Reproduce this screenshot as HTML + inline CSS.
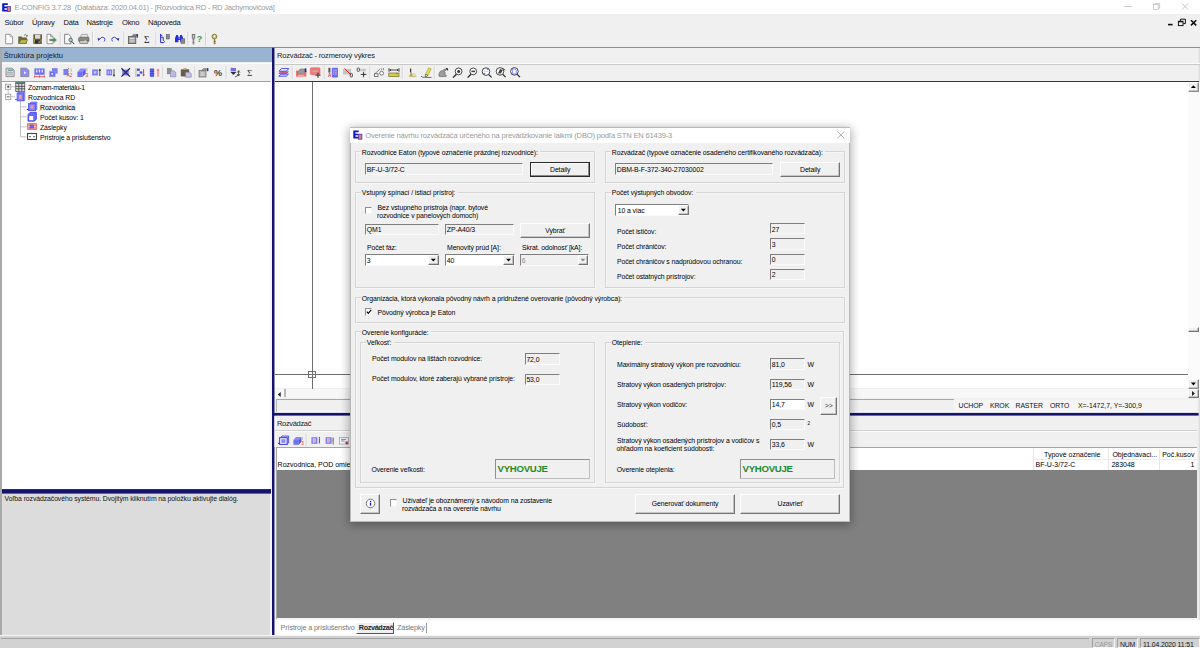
<!DOCTYPE html>
<html><head><meta charset="utf-8"><title>E-CONFIG</title>
<style>
html,body{margin:0;padding:0;}
body{width:1200px;height:648px;overflow:hidden;background:#f0f0f0;position:relative;font-family:"Liberation Sans",sans-serif;font-size:6.9px;letter-spacing:-0.1px;color:#000;line-height:1;}
.a{position:absolute;box-sizing:border-box;}
.t{position:absolute;white-space:pre;line-height:8px;height:8px;margin-top:0.7px;}
.seg{font-size:7.6px;letter-spacing:-0.26px;}
.hd{font-size:7.5px;letter-spacing:0;}
/* group box */
.gb{position:absolute;box-sizing:border-box;border:1px solid #d5d5d5;box-shadow:0.6px 0.6px 0 #fbfbfb, inset 0.6px 0.6px 0 #fbfbfb;}
.gl{position:absolute;white-space:pre;background:#f0f0f0;padding:0 2.4px 0 1px;line-height:8px;height:8px;margin-top:1.3px;}
/* sunken edit */
.ed{position:absolute;box-sizing:border-box;background:#f0f0f0;border:1.3px solid;border-color:#7e7e7e #fbfbfb #fbfbfb #7e7e7e;white-space:pre;line-height:9px;padding-left:0.8px;padding-top:0.5px;overflow:hidden;}
.ed.w{background:#fff;}
/* raised button */
.bt{position:absolute;box-sizing:border-box;background:#f0f0f0;border:1px solid;border-color:#fdfdfd #747474 #747474 #fdfdfd;box-shadow:inset -0.8px -0.8px 0 #b8b8b8;text-align:center;white-space:pre;}
.cb{position:absolute;box-sizing:border-box;background:#fff;border:1px solid;border-color:#8c8c8c #f4f4f4 #f4f4f4 #8c8c8c;}
.arr{position:absolute;width:8px;height:6px;margin:-1.5px 0 0 -1.6px;background:#000;clip-path:polygon(1.5px 1.5px,6.5px 1.5px,4px 4.3px);}
.arr.up{clip-path:polygon(1.5px 4.3px,6.5px 4.3px,4px 1.5px);}
.arr.dis{background:#8c8c8c;}
.arl{position:absolute;width:6px;height:8px;background:#15151f;clip-path:polygon(4.3px 1.5px,4.3px 6.5px,1.5px 4px);}
.arrr{position:absolute;width:6px;height:8px;background:#15151f;clip-path:polygon(1.7px 1.5px,1.7px 6.5px,4.5px 4px);}
.navy{background:#12126c;}
</style></head><body>

<!-- ===== main title bar ===== -->
<div class="a" style="left:0;top:0;width:1200px;height:14px;background:#fff;"></div>
<div class="t seg" style="left:14.5px;top:3.2px;color:#9a9a9a;">E-CONFIG 3.7.28  (Databáza: 2020.04.01) - [Rozvodnica RD - RD Jachymovičová]</div>

<!-- ===== menu bar ===== -->
<div class="t seg" style="left:4.5px;top:18.4px;color:#111;word-spacing:0;">Súbor</div>
<div class="t seg" style="left:32px;top:18.4px;color:#111;">Úpravy</div>
<div class="t seg" style="left:63.5px;top:18.4px;color:#111;">Dáta</div>
<div class="t seg" style="left:86.5px;top:18.4px;color:#111;">Nástroje</div>
<div class="t seg" style="left:122px;top:18.4px;color:#111;">Okno</div>
<div class="t seg" style="left:148px;top:18.4px;color:#111;">Nápoveda</div>

<!-- separator under toolbar -->
<div class="a" style="left:0;top:46.6px;width:1200px;height:1.2px;background:#8f8f8f;"></div>

<!-- ===== left panel ===== -->
<div class="a" style="left:1px;top:48px;width:271px;height:14.3px;background:#99b4d1;"></div>
<div class="t hd" style="left:3.8px;top:51.1px;color:#1a1a1a;">Štruktúra projektu</div>
<div class="a" style="left:1px;top:63px;width:271px;height:1px;background:#fafafa;"></div>
<div class="a" style="left:1px;top:80.6px;width:270px;height:1px;background:#a0a0a0;"></div>
<div class="a" style="left:2px;top:81.6px;width:268px;height:408.4px;background:#fff;"></div>
<div class="a" style="left:0;top:48px;width:2px;height:587px;background:#a9a9a9;"></div>
<div class="a" style="left:2px;top:493px;width:268px;height:142px;background:#dcdcdc;"></div>
<div class="t" style="left:4.6px;top:494.7px;color:#111;">Voľba rozvádzačového systému. Dvojitým kliknutím na položku aktivujte dialóg.</div>

<!-- vertical navy splitter -->

<!-- fractional-edge lines -->
<svg class="a" style="left:0;top:0;" width="1200" height="648" viewBox="0 0 1200 648">
<rect x="270" y="81.6" width="2" height="553.4" fill="#f4f4f4"/>
<rect x="2" y="489.1" width="269" height="4.5" fill="#14146e"/>
<rect x="274.4" y="411.3" width="925" height="1.2" fill="#fafafa"/>
<rect x="272" y="412.9" width="928" height="2.7" fill="#14146e"/>
<rect x="272" y="47.8" width="2.45" height="587.4" fill="#14146e"/><rect x="1198.6" y="48" width="1.4" height="587" fill="#dedede"/>
<rect x="274.45" y="416" width="1.2" height="31" fill="#fafafa"/><rect x="954" y="399.6" width="243" height="11.6" fill="#f5f5f5"/>
</svg>

<!-- ===== right top pane ===== -->
<div class="a" style="left:274.6px;top:62.6px;width:925px;height:1px;background:#fbfbfb;"></div>
<div class="a" style="left:274.6px;top:63.6px;width:925px;height:0.8px;background:#c8c8c8;"></div>
<div class="t hd" style="left:277px;top:51.1px;color:#222;letter-spacing:-0.17px;">Rozvádzač - rozmerový výkres</div>
<div class="a" style="left:274.6px;top:80.5px;width:924.4px;height:1.2px;background:#2c2c8c;"></div>
<div class="a" style="left:274.6px;top:81.7px;width:913.4px;height:306.8px;background:#fff;"></div>
<!-- canvas lines -->
<div class="a" style="left:311.6px;top:81.7px;width:1px;height:307px;background:#6e6e6e;"></div>
<div class="a" style="left:274.6px;top:373.9px;width:913.4px;height:1px;background:#6e6e6e;"></div>
<div class="a" style="left:308.4px;top:370.9px;width:7.4px;height:7px;border:1px solid #6e6e6e;"></div>

<!-- v scrollbar -->
<div class="a" style="left:1188px;top:81.7px;width:12px;height:307px;background:#fbfbfb;"></div>
<!-- h scrollbar -->
<div class="a" style="left:274.6px;top:388.5px;width:925.4px;height:9.7px;background:#f7f7f7;"></div>

<!-- status strip of drawing pane -->
<div class="a" style="left:276px;top:398.8px;width:678px;height:1px;background:#a8a8a8;"></div>
<div class="a" style="left:276px;top:398.8px;width:1px;height:13px;background:#b4b4b4;"></div>
<div class="t" style="left:958.5px;top:401.2px;color:#111;">UCHOP</div><div class="t" style="left:990px;top:401.2px;color:#111;">KROK</div><div class="t" style="left:1015.5px;top:401.2px;color:#111;">RASTER</div><div class="t" style="left:1050px;top:401.2px;color:#111;">ORTO</div><div class="t" style="left:1078px;top:401.2px;color:#111;letter-spacing:0;">X=-1472,7, Y=-300,9</div>


<!-- ===== right bottom pane ===== -->
<div class="t hd" style="left:277px;top:419.2px;color:#222;letter-spacing:-0.33px;">Rozvádzač</div>
<div class="a" style="left:274.6px;top:430px;width:922px;height:1px;background:#d0d0d0;"></div>
<div class="a" style="left:274.6px;top:431px;width:922px;height:1px;background:#fbfbfb;"></div>
<div class="a" style="left:275.6px;top:447px;width:921px;height:1.4px;background:#a6a6a6;"></div>
<div class="a" style="left:276.6px;top:448.4px;width:920px;height:170px;background:#808080;"></div>
<div class="a" style="left:276.6px;top:448.4px;width:920px;height:21.2px;background:#fff;"></div>
<div class="a" style="left:275.6px;top:447px;width:1.2px;height:172px;background:#a6a6a6;"></div>
<div class="a" style="left:276.6px;top:618.4px;width:921px;height:1.4px;background:#f4f4f4;"></div>
<!-- tabs strip -->
<div class="a" style="left:274.6px;top:619.8px;width:925.4px;height:15.2px;background:#fff;"></div>

<!-- ===== status bar ===== -->
<div class="a" style="left:0;top:635px;width:1200px;height:1.4px;background:#f5f5f5;"></div>
<div class="a" style="left:0;top:636.4px;width:1200px;height:11.6px;background:#d2d2d2;"></div>
<div class="a" style="left:1px;top:637.6px;width:1088px;height:1.2px;background:#a2a2a2;"></div>


<!-- ===== ICON OVERLAY 1: main toolbar + left toolbar ===== -->
<svg class="a" style="left:0;top:0;" width="1200" height="100" viewBox="0 0 1200 100">
<!-- app icon -->
<path d="M2.2 3.2h5.6v1.8H4.4v1.5h2.7v1.7H4.4v1.6h3.4v1.8H2.2z" fill="#1212c8"/><rect x="7.3" y="6.6" width="3.2" height="5" fill="#e87878" stroke="#2a2ab0" stroke-width="0.7"/>
<!-- separators main -->
<g stroke="#c9c9c9" stroke-width="0.9"><path d="M60.3 32v13.5M92.5 32v13.5M124 32v13.5M156 32v13.5M188 32v13.5M205.7 32v13.5"/></g>
<g stroke="#fbfbfb" stroke-width="0.7"><path d="M61.1 32v13.5M93.3 32v13.5M124.8 32v13.5M156.8 32v13.5M188.8 32v13.5M206.5 32v13.5"/></g>
<!-- 1 new -->
<path d="M5.7 34.3h4.4l2.5 2.5v7H5.7z" fill="#fdfdfd" stroke="#8c8c8c" stroke-width="0.9"/><path d="M10.1 34.3v2.5h2.5" fill="none" stroke="#9a9a9a" stroke-width="0.7"/>
<!-- 2 open -->
<path d="M18.6 36.8h2.8l0.9 1h4.2v5.6h-7.9z" fill="#746c38" stroke="#4e4a2a" stroke-width="0.5"/><path d="M18.8 43.4l2.2-3.7h6.8l-2.2 3.7z" fill="#bcba4c" stroke="#5a5630" stroke-width="0.5"/><path d="M24 35.2q1.8-1.2 3 0.6" fill="none" stroke="#555" stroke-width="0.7"/><path d="M27.6 34.8v1.6h-1.6z" fill="#444"/>
<!-- 3 save -->
<rect x="33.3" y="34.3" width="8.7" height="9.5" fill="#6a583e"/><rect x="35" y="34.7" width="5.3" height="4" fill="#d9d9d9"/><rect x="34.9" y="40.3" width="5.3" height="3.3" fill="#2e2e2e"/><rect x="38.6" y="41" width="1" height="2.2" fill="#bbb"/><rect x="33.9" y="39.2" width="0.8" height="3.4" fill="#b9b93c"/><rect x="40.7" y="39.2" width="0.8" height="3.4" fill="#b9b93c"/>
<!-- 4 export -->
<path d="M47 34.3h3.6l2.4 2.4v7H47z" fill="#fbfbfb" stroke="#8c8c8c" stroke-width="0.9"/><path d="M50.6 34.3v2.4H53" fill="none" stroke="#777" stroke-width="0.7"/><path d="M49.5 39h4.2v-1.7l3 2.7l-3 2.7v-1.7h-4.2z" fill="#3c9a3c" stroke="#b58ad8" stroke-width="0.4"/>
<!-- 5 preview -->
<path d="M64.6 34.3h4l2.4 2.4v7h-6.4z" fill="#fbfbfb" stroke="#7c7c7c" stroke-width="0.9"/><circle cx="70.6" cy="40" r="1.8" fill="#9ad8e8" stroke="#444" stroke-width="0.7"/><path d="M71.8 41.4l2.3 2.6" stroke="#333" stroke-width="1"/>
<!-- 6 print -->
<path d="M81.6 34.4h5.6l1.2 3.2h-8z" fill="#ececec" stroke="#777" stroke-width="0.6"/><rect x="78.6" y="37.2" width="10.4" height="4.6" rx="1.2" fill="#8a8a8a" stroke="#555" stroke-width="0.6"/><rect x="79.8" y="40.6" width="8" height="3" fill="#c8c8c8" stroke="#666" stroke-width="0.6"/><rect x="84.4" y="40.2" width="1.6" height="1.2" fill="#e8e040"/>
<!-- 7 undo -->
<path d="M99.5 39.2q2.4-3.6 5 -1.2q1 1.6 -0.3 3.4" fill="none" stroke="#3c3ca8" stroke-width="0.9"/><path d="M97.4 38.2l3.2 0.4l-2.2 2.4z" fill="#2828a0"/>
<!-- 8 redo -->
<path d="M117.2 39.2q-2.4-3.6 -5 -1.2q-1 1.6 0.3 3.4" fill="none" stroke="#3c3ca8" stroke-width="0.9"/><path d="M119.4 38.2l-3.2 0.4l2.2 2.4z" fill="#2828a0"/>
<!-- 9 properties -->
<rect x="128.4" y="36.4" width="7.4" height="7.2" fill="#a8a8a8" stroke="#555" stroke-width="0.8"/><path d="M130 38.6h4.2M130 41h4.2" stroke="#eee" stroke-width="0.8"/><path d="M131.6 36.4l1.8-2h4l-1.6 2z" fill="#888" stroke="#555" stroke-width="0.5"/><rect x="136.6" y="34.2" width="1.3" height="3.4" fill="#1a1a9a"/>
<!-- 10 sigma -->
<text x="144" y="42.6" font-family="Liberation Serif" font-size="9.4" fill="#333">&#931;</text>
<!-- 11 tree -->
<path d="M160.6 34v8.6h3M160.6 37.2h2.6v3M160.6 34.4l1.6 1.6" fill="none" stroke="#2a2ae0" stroke-width="1"/><path d="M163.2 40.2l1.4 1.2l-1.4 1.8" fill="none" stroke="#2a2ae0" stroke-width="0.9"/><rect x="166.2" y="34.4" width="3.2" height="4.6" fill="#8a8a8a" stroke="#555" stroke-width="0.5"/>
<!-- 12 binoculars -->
<path d="M175 38.6l1.2-3.6h1.8l0.6 2.4h1l0.6-2.4h1.8l1.2 3.6v3.6h-3v-2.2h-1.8v2.2H175z" fill="#2a2ae0"/><rect x="181" y="38.8" width="3.8" height="4.6" fill="#8a8a8a" stroke="#555" stroke-width="0.5"/><circle cx="179.3" cy="38.6" r="0.6" fill="#50d8e8"/>
<!-- 13 help -->
<rect x="192.2" y="34.4" width="2.6" height="3.8" fill="#c4c4c4" stroke="#555" stroke-width="0.7"/><rect x="192.6" y="39.2" width="1.7" height="1.4" fill="#555"/><rect x="192.6" y="41.4" width="1.7" height="1.4" fill="#555"/><rect x="192.6" y="43.4" width="1.7" height="1" fill="#555"/><text x="196.6" y="42.2" font-family="Liberation Sans" font-weight="bold" font-size="9.5" fill="#3c9a50">?</text>
<!-- 14 key -->
<circle cx="214.4" cy="36.6" r="2.4" fill="#d8d048" stroke="#7a6a3a" stroke-width="0.9"/><path d="M214.4 39v5.2M214.4 41.4h1.4M214.4 43.2h1.2" stroke="#8a7840" stroke-width="1.3"/><circle cx="214.4" cy="36.2" r="0.7" fill="#fff"/>

<!-- ==== left panel toolbar (y center 72.5) ==== -->
<g stroke="#c9c9c9" stroke-width="0.9"><path d="M163 66v13M195 66v13M226.2 66v13"/></g>
<g stroke="#fbfbfb" stroke-width="0.7"><path d="M163.8 66v13M195.8 66v13M227 66v13"/></g>
<!-- L1 list doc -->
<path d="M6 68.2h6l2.2 2v6.4H6z" fill="#d6d6d6" stroke="#7e7e7e" stroke-width="0.8"/><rect x="8" y="69.6" width="5" height="1.1" fill="#3a9ac0"/><path d="M7.2 72.4h5.8M7.2 74.2h5.8" stroke="#9a9a9a" stroke-width="0.7"/>
<!-- L2 doc blue -->
<path d="M20.8 68.2h5.6l2.4 2v6.4h-8z" fill="#8c8cf4" stroke="#7e7e7e" stroke-width="0.8"/><path d="M24 71.2l2.4 1.6l-2.4 1.6z" fill="#e8e8ff"/>
<!-- L3 blue panel red base -->
<rect x="34.4" y="68.4" width="10.2" height="6.4" fill="#7070f2"/><path d="M36.8 69.4v3M39.5 69.4v3M42.2 69.4v3" stroke="#f0f0ff" stroke-width="1.2"/><path d="M34.4 76.6h10.2M34.6 75.4v2.2M39.5 75.4v2.2M44.4 75.4v2.2" stroke="#e83030" stroke-width="0.7"/>
<!-- L4 cubes -->
<rect x="52" y="68.2" width="5.6" height="5.4" fill="#7878f4"/><rect x="49.4" y="71.2" width="5.8" height="5.6" fill="#7070f2" stroke="#a0a0ff" stroke-width="0.5"/><rect x="51.4" y="73" width="1.6" height="1.8" fill="#e8e8ff"/>
<!-- L5 -->
<rect x="63.4" y="69" width="4.6" height="6" fill="#7c7cf4"/><path d="M68.6 68v7" stroke="#777" stroke-width="0.8" stroke-dasharray="1 0.6"/><text x="66.8" y="77.2" font-family="Liberation Sans" font-size="4.6" fill="#e83030">A2</text><path d="M71.2 68.4v3.4" stroke="#999" stroke-width="0.6"/>
<!-- L6 3D + red 3 -->
<path d="M77.4 72l3-3.4h5.2l-3 3.4z" fill="#8a8af6"/><path d="M77.4 72h5.2v5h-5.2z" fill="#7070f2"/><path d="M82.6 72l3-3.4v5l-3 3.4z" fill="#5858e0"/><text x="85.2" y="77" font-family="Liberation Sans" font-size="5.6" fill="#e83030">3</text><path d="M86.8 68.2v3" stroke="#888" stroke-width="0.6"/>
<!-- L7 box + up arrow -->
<rect x="92.2" y="69.4" width="5.8" height="6" fill="#7c7cf4"/><rect x="93.8" y="71.2" width="2.6" height="2.4" fill="#c8c8ff"/><path d="M99.8 76v-6.6" stroke="#333" stroke-width="0.9"/><path d="M98.4 70.8l1.4-2.2l1.4 2.2z" fill="#333"/>
<!-- L8 box + down arrow -->
<rect x="106.4" y="69.4" width="5.8" height="6" fill="#7c7cf4"/><path d="M108.2 71v2.8M110.4 71v2.8" stroke="#d8d8ff" stroke-width="0.9"/><path d="M114 69v6" stroke="#444" stroke-width="0.9"/><circle cx="114" cy="75.4" r="1" fill="#444"/>
<!-- L9 X -->
<rect x="122.2" y="69.6" width="6.6" height="5.8" fill="#7c7cf4"/><path d="M121.4 68.2l8.6 8.4M130 68.2l-8.6 8.4" stroke="#26264a" stroke-width="1.2"/>
<!-- L10 arrows -->
<path d="M136 68v9" stroke="#9a9a9a" stroke-width="0.8"/><rect x="137" y="68.6" width="2.8" height="2.2" fill="#4a4af0"/><rect x="139.6" y="71.4" width="2.8" height="2.2" fill="#4a4af0"/><rect x="137" y="74.2" width="2.8" height="2.2" fill="#4a4af0"/><path d="M143.6 69v6.6" stroke="#e83030" stroke-width="0.9"/><path d="M142.2 74.6l1.4 2l1.4-2z" fill="#e83030"/>
<!-- L11 stack + red up -->
<rect x="150" y="68.4" width="4" height="8.6" fill="#7070f2"/><path d="M149.6 69.8h4.8M149.6 71.6h4.8M149.6 73.4h4.8M149.6 75.2h4.8" stroke="#2a2a90" stroke-width="0.6"/><path d="M158 77v-6.8" stroke="#f06060" stroke-width="0.9"/><path d="M156.6 70.8l1.4-2.4l1.4 2.4z" fill="#f06060"/>
<!-- L12 copy -->
<rect x="167.4" y="68.4" width="3.8" height="5.4" fill="#8e8e8e" stroke="#666" stroke-width="0.5"/><path d="M170.4 70.8h3.6l1.8 1.6v4.4h-5.4z" fill="#bcbcd8" stroke="#7878b8" stroke-width="0.6"/>
<!-- L13 paste -->
<rect x="180.8" y="69.2" width="8.4" height="7.2" rx="0.8" fill="#6a5a48"/><rect x="183.6" y="68.2" width="3" height="1.8" fill="#a8a060"/><path d="M185.6 72.2h3.8l1.8 1.4v3.6h-5.6z" fill="#c4c4dc" stroke="#7878b8" stroke-width="0.6"/>
<!-- L14 properties -->
<rect x="199" y="70.6" width="7" height="6.4" fill="#b4b4b4" stroke="#6a6a6a" stroke-width="0.7"/><path d="M200.4 73h4.2M200.4 75h4.2" stroke="#eee" stroke-width="0.7"/><path d="M201.6 70.6l1.8-2h4l-1.6 2z" fill="#999" stroke="#666" stroke-width="0.5"/><rect x="207" y="68.2" width="1.4" height="3" fill="#2a2ab8"/>
<!-- L15 percent -->
<text x="214" y="76" font-family="Liberation Sans" font-weight="bold" font-size="8.4" fill="#3a3a3a" textLength="8" lengthAdjust="spacingAndGlyphs">%</text>
<!-- L16 -->
<rect x="230.6" y="68" width="5.4" height="3.4" fill="#7070f2"/><rect x="231" y="67.6" width="1.6" height="1" fill="#e06060"/><path d="M230.4 72l3 3l3-3z" fill="#2c2c4c"/><path d="M235 77l3.6-2M238.6 70.6v5" stroke="#333" stroke-width="0.8"/><path d="M237.2 72.6l1.4-2l1.4 2M237.2 74l1.4 2l1.4-2" fill="none" stroke="#333" stroke-width="0.7"/>
<!-- L17 sigma -->
<text x="247" y="76.2" font-family="Liberation Serif" font-size="9" fill="#333">&#931;</text>
</svg>


<!-- ===== TREE ===== -->
<div class="a" style="left:39px;top:102.4px;width:37.4px;height:9px;background:#efefef;"></div>
<div class="t" style="left:28px;top:83.2px;letter-spacing:-0.27px;">Zoznam-materiálu-1</div>
<div class="t" style="left:28px;top:93.2px;letter-spacing:-0.06px;">Rozvodnica RD</div>
<div class="t" style="left:40px;top:103.2px;">Rozvodnica</div>
<div class="t" style="left:40px;top:113.2px;">Počet kusov: 1</div>
<div class="t" style="left:40px;top:123.2px;">Záslepky</div>
<div class="t" style="left:40px;top:133.2px;letter-spacing:-0.14px;">Prístroje a príslušenstvo</div>
<svg class="a" style="left:0;top:80px;" width="272" height="64" viewBox="0 80 272 64">
<g stroke="#bcbcbc" stroke-width="0.9" fill="none"><path d="M8.2 89.6v4.4M11 86.8h4.4M11 96.8h4.4M20.5 101v35.8M20.5 106.8h6M20.5 116.8h6M20.5 126.8h6M20.5 136.8h6"/></g>
<rect x="5.6" y="84.2" width="5.2" height="5.2" fill="#fff" stroke="#8a8a8a" stroke-width="0.7"/><path d="M6.8 86.8h2.8M8.2 85.4v2.8" stroke="#222" stroke-width="0.7"/>
<rect x="5.6" y="94.2" width="5.2" height="5.2" fill="#fff" stroke="#8a8a8a" stroke-width="0.7"/><path d="M6.8 96.8h2.8" stroke="#222" stroke-width="0.7"/>
<!-- grid icon -->
<rect x="15.8" y="82.2" width="9" height="9.4" fill="#dcdcdc" stroke="#333" stroke-width="0.7"/><rect x="16.2" y="82.4" width="8.2" height="1.6" fill="#2a8a6a"/><path d="M18.8 84v7.6M21.8 84v7.6M15.8 86.4h9M15.8 88.8h9" stroke="#333" stroke-width="0.7"/>
<!-- rozvodnica RD icon -->
<path d="M17.4 93l1.6-1.2h5.8v8.6h-1.6" fill="#9a9afa" stroke="#6a6af4" stroke-width="0.8"/><rect x="17.2" y="93.2" width="6.2" height="7.6" fill="#8484f8" stroke="#5a5af4" stroke-width="1"/><rect x="19" y="95" width="2.6" height="3.8" fill="#f49a9a"/><path d="M15.6 97v2.4" stroke="#fff" stroke-width="0.8"/><path d="M15 99.4h2" stroke="#5a5af4" stroke-width="1"/>
<!-- rozvodnica child icon -->
<path d="M29.6 103.4l1.6-1.4h5.6v7.2l-1.4 1.4" fill="#9a9afa" stroke="#5a5af4" stroke-width="0.8"/><rect x="28.6" y="103.6" width="6.8" height="7" fill="#8484f8" stroke="#5a5af4" stroke-width="1"/><rect x="30.6" y="105.4" width="2.8" height="3.2" fill="#f49a9a"/><path d="M26.8 109.4h2" stroke="#3a3af0" stroke-width="1.2"/>
<!-- pocet kusov icon -->
<path d="M28 114.6l2-2.2h6.4v6.6l-2 2.2H28z" fill="#6a6af4" stroke="#2a2ae0" stroke-width="0.7"/><rect x="29.2" y="116" width="4" height="4.2" fill="#fff"/>
<!-- zaslepky icon -->
<rect x="27.6" y="123.6" width="8.8" height="5.8" fill="#f49090" stroke="#ee6060" stroke-width="0.8"/><rect x="30" y="125" width="3.4" height="3" fill="#7070f0" stroke="#3030c0" stroke-width="0.5"/><path d="M28.6 126.5h1.2M34.2 126.5h1.2" stroke="#fff" stroke-width="0.7"/>
<!-- pristroje icon -->
<rect x="27.6" y="133.4" width="8.8" height="6" fill="#fff" stroke="#222" stroke-width="0.9"/><rect x="29.4" y="136" width="1.2" height="1.2" fill="#222"/><rect x="33.4" y="136" width="1.2" height="1.2" fill="#222"/>
</svg>

<!-- ===== window controls ===== -->
<svg class="a" style="left:1110px;top:0;" width="90" height="30" viewBox="1110 0 90 30">
<path d="M1124.4 6.5h7" stroke="#b8b8b8" stroke-width="0.8"/>
<rect x="1153.4" y="4.6" width="4.8" height="4.8" fill="none" stroke="#b8b8b8" stroke-width="0.7"/><path d="M1154.8 4.6v-1.2h4.8v4.8h-1.4" fill="none" stroke="#b8b8b8" stroke-width="0.7"/>
<path d="M1182 3.4l6.2 6.2M1188.2 3.4l-6.2 6.2" stroke="#b8b8b8" stroke-width="0.8"/>
<path d="M1168 24.6h4.6" stroke="#111" stroke-width="1.6"/>
<rect x="1178.4" y="21.4" width="4.6" height="4.2" fill="#f0f0f0" stroke="#111" stroke-width="1"/><path d="M1180.4 21v-1.8h5v4.4h-2" fill="none" stroke="#111" stroke-width="1"/><path d="M1178.4 21.6h4.6" stroke="#111" stroke-width="1.4"/>
<path d="M1191 20.2l5.2 5.2M1196.2 20.2l-5.2 5.2" stroke="#111" stroke-width="1.6"/>
</svg>

<!-- ===== scrollbars ===== -->
<div class="bt" style="left:1188.2px;top:82px;width:10.4px;height:9.8px;border-color:#fff #8c8c8c #8c8c8c #fff;"></div>
<div class="arr up" style="left:1191px;top:85.2px;"></div>
<div class="bt" style="left:1188.2px;top:379px;width:10.4px;height:9.5px;border-color:#fff #8c8c8c #8c8c8c #fff;"></div>
<div class="arr" style="left:1191px;top:382.6px;"></div>
<div class="bt" style="left:1188.2px;top:327px;width:10.4px;height:5px;"></div>
<div class="arl" style="left:276.4px;top:390.4px;"></div>
<svg class="a" style="left:280px;top:386px;" width="10" height="14" viewBox="280 386 10 14"><rect x="284.1" y="388.9" width="1.9" height="8.2" fill="#b4b4b4"/></svg>
<div class="bt" style="left:1188.2px;top:389px;width:10.4px;height:9.2px;"></div><div class="arrr" style="left:1190.4px;top:389.6px;"></div>

<!-- ===== table ===== -->
<div class="t" style="left:277.6px;top:460.6px;letter-spacing:0;font-size:7px;">Rozvodnica, POD omietku, 72 mod.</div>
<div class="t" style="left:1044px;top:450.2px;letter-spacing:0;font-size:7px;">Typové označenie</div>
<div class="t" style="left:1112.4px;top:450.2px;letter-spacing:0;font-size:7px;">Objednávaci...</div>
<div class="t" style="left:1162.2px;top:450.2px;letter-spacing:0;font-size:7px;">Poč.kusov</div>
<div class="t" style="left:1035.6px;top:460.6px;letter-spacing:0;font-size:7px;">BF-U-3/72-C</div>
<div class="t" style="left:1111.4px;top:460.6px;letter-spacing:0;font-size:7px;">283048</div>
<div class="t" style="left:1190.6px;top:460.6px;letter-spacing:0;font-size:7px;">1</div>
<div class="a" style="left:1033.4px;top:449px;width:0.8px;height:20.6px;background:#e6e6e6;"></div>
<div class="a" style="left:1108.4px;top:449px;width:0.8px;height:20.6px;background:#e6e6e6;"></div>
<div class="a" style="left:1158.6px;top:449px;width:0.8px;height:20.6px;background:#e6e6e6;"></div>
<div class="a" style="left:1033.4px;top:459.4px;width:163px;height:0.8px;background:#ececec;"></div>

<!-- ===== tabs ===== -->
<div class="t" style="left:280.6px;top:623.4px;color:#777;font-size:7.2px;letter-spacing:-0.12px;">Prístroje a príslušenstvo</div>
<div class="a" style="left:355.8px;top:622.4px;width:38.4px;height:11.6px;background:#f0f0f0;border:1px solid;border-color:#fdfdfd #555 #555 #fdfdfd;"></div>
<div class="t" style="left:358.8px;top:623.4px;color:#222;font-weight:bold;font-size:7.2px;letter-spacing:-0.32px;">Rozvádzač</div>
<div class="t" style="left:397px;top:623.4px;color:#777;font-size:7.2px;letter-spacing:-0.12px;">Záslepky</div>
<div class="a" style="left:426px;top:622.6px;width:0.8px;height:10.6px;background:#9a9a9a;"></div>

<!-- ===== status cells ===== -->
<div class="a" style="left:1091.6px;top:637.6px;width:23.6px;height:10.4px;border:1px solid;border-color:#a0a0a0 #f8f8f8 #f8f8f8 #a0a0a0;"></div>
<div class="a" style="left:1117.4px;top:637.6px;width:20.6px;height:10.4px;border:1px solid;border-color:#a0a0a0 #f8f8f8 #f8f8f8 #a0a0a0;"></div>
<div class="a" style="left:1140.2px;top:637.6px;width:59.8px;height:10.4px;border:1px solid;border-color:#a0a0a0 #f8f8f8 #f8f8f8 #a0a0a0;"></div>
<div class="t" style="left:1094.8px;top:640.2px;color:#9a9a9a;letter-spacing:-0.4px;">CAPS</div>
<div class="t" style="left:1120px;top:640.2px;color:#223;letter-spacing:-0.25px;">NUM</div>
<div class="t" style="left:1143px;top:640.2px;color:#111;letter-spacing:-0.12px;">11.04.2020 11:51</div>


<!-- ===== ICON OVERLAY 2: drawing toolbar (y center 72.3) ===== -->
<svg class="a" style="left:274px;top:62px;" width="260" height="20" viewBox="274 62 260 20">
<g stroke="#c9c9c9" stroke-width="0.9"><path d="M292.3 66v13M324.3 66v13M370 66v13M402.3 66v13M434.3 66v13"/></g>
<g stroke="#fbfbfb" stroke-width="0.7"><path d="M293.1 66v13M325.1 66v13M370.8 66v13M403.1 66v13M435.1 66v13"/></g>
<!-- D1 layers -->
<path d="M279 71.2l2.4-2.6h7.4l-2.4 2.6z" fill="#f4f4ff" stroke="#3a3af0" stroke-width="0.9"/><path d="M278.8 73.4l2-1.6h7.6l-2 1.6z" fill="#f06868" stroke="#3a3af0" stroke-width="0.6"/><path d="M278.8 76.2l2.2-2h7.4l-2.2 2z" fill="#f4f4ff" stroke="#3a3af0" stroke-width="0.9"/>
<!-- D2 red/gray -->
<rect x="296" y="70.6" width="10.4" height="6" fill="#f07070"/><path d="M297.6 72.6l2.6-3.6h5.2v3.4l-2.2 1.8h-5.6z" fill="#9a9a9a" stroke="#666" stroke-width="0.5"/><rect x="304.8" y="68.4" width="1.5" height="3.6" fill="#1a1a9a"/><path d="M298 75.2h6" stroke="#f8d0d0" stroke-width="0.8"/>
<!-- D3 red + cross -->
<rect x="310.4" y="67.8" width="9.6" height="6.8" rx="0.8" fill="#f07878" stroke="#e85a5a" stroke-width="0.6"/><rect x="312.6" y="70.4" width="5.2" height="1.8" fill="#b8b0b0"/><path d="M318 72.6v5.2M315.4 75.2h5.2" stroke="#333" stroke-width="1"/>
<!-- D4 blue w/ red A -->
<rect x="331.8" y="67.8" width="6.2" height="9.6" rx="0.8" fill="#6a6af4"/><path d="M333.8 69.6v6M336 69.6v6" stroke="#f8d8d8" stroke-width="1" stroke-dasharray="1.2 0.8"/><rect x="328.4" y="67.8" width="2" height="4.8" fill="#555"/><text x="328" y="77.4" font-family="Liberation Sans" font-weight="bold" font-size="4.6" fill="#e83030">A</text>
<!-- D5 gray w red diagonal -->
<rect x="343" y="69" width="8" height="5.4" fill="#c4c4c4"/><path d="M344.6 68.4l6.4 6.6" stroke="#e02020" stroke-width="1"/><rect x="350.2" y="73.4" width="2.2" height="3.6" rx="0.8" fill="none" stroke="#444" stroke-width="0.9"/>
<!-- D6 cross -->
<rect x="357.2" y="68" width="2.2" height="3.4" rx="0.8" fill="none" stroke="#444" stroke-width="0.9"/><rect x="360" y="68.8" width="6" height="2.4" fill="#c8c8c8"/><path d="M363.6 71.8v5.4M360.8 74.4h5.6" stroke="#333" stroke-width="1"/>
<!-- D7 link -->
<path d="M375 73.6l5-4.6" stroke="#555" stroke-width="0.7"/><rect x="374.6" y="73.8" width="3.4" height="2.8" fill="#fff" stroke="#444" stroke-width="0.7"/><circle cx="381.6" cy="73.2" r="1.9" fill="#fff" stroke="#444" stroke-width="0.7"/><path d="M381 68.4l1 1.6M383.4 68v2.2" stroke="#444" stroke-width="0.6"/>
<!-- D8 measure -->
<path d="M389 68.2v3.6M399 68.2v3.6M389.6 70h8.8" stroke="#222" stroke-width="0.8"/><path d="M389.4 70l1.6-1v2zM398.6 70l-1.6-1v2z" fill="#222"/><rect x="388.8" y="73" width="10.2" height="3.6" fill="#d8d040" stroke="#6a6a30" stroke-width="0.7"/><path d="M397 73v1.4" stroke="#444" stroke-width="0.6"/>
<!-- D9 -->
<path d="M410.6 68.4v4" stroke="#333" stroke-width="1.2"/><path d="M409 76.4l1.8-4h1.2l1 4z" fill="#c0a840"/><path d="M412.6 76.4l1.8-3.2l1.8 3.2z" fill="#f0e8c8" stroke="#c8b888" stroke-width="0.5"/><path d="M408.6 76.6h8" stroke="#b8a878" stroke-width="0.5"/>
<!-- D10 pencil -->
<path d="M425.4 74.4l3.2-6.6l2.6 1l-3.2 6.6z" fill="#e8e040" stroke="#8a8a3a" stroke-width="0.5"/><path d="M425.4 74.4l2.6 1l-2.6 1.8z" fill="#f4f4f4" stroke="#444" stroke-width="0.6"/><path d="M421 76.2q2 2 4.4 0.8M425.4 77.4h6" fill="none" stroke="#333" stroke-width="0.7"/>
<!-- D11 hand/prev -->
<path d="M439.2 73.2q0.8-2.6 3.4-2.8l2.4-1.4l1 1l-1.4 1.6q1 1.2 0.4 2.6l1.6 1.8l-0.8 0.6h-6.4q-1-1.6-0.2-3.4z" fill="#9c9c9c" stroke="#5a5a5a" stroke-width="0.6"/><path d="M445.4 67.8l2.4 0.4l0.6 2.4l-1.6-0.4z" fill="#333"/>
<!-- D12 zoom+ -->
<circle cx="458.6" cy="71.4" r="3.4" fill="#fff" stroke="#333" stroke-width="0.9"/><path d="M456.4 74.2l-3.4 3.4" stroke="#222" stroke-width="1.3"/><circle cx="458.6" cy="71.4" r="1.5" fill="#333"/>
<!-- D13 zoom- -->
<circle cx="473.2" cy="71.4" r="3.4" fill="#fff" stroke="#333" stroke-width="0.9"/><path d="M471 74.2l-3.4 3.4" stroke="#222" stroke-width="1.3"/><rect x="471.4" y="70.6" width="3.6" height="1.6" fill="#444"/>
<!-- D14 zoom window -->
<circle cx="486" cy="71.6" r="3.8" fill="#fff" stroke="#333" stroke-width="0.9"/><path d="M488.8 74.6l2.8 2.8" stroke="#222" stroke-width="1.2"/><path d="M483.6 73.6l1.4-0.2l-1 1.2zM488.4 69.4l-1.4 0.2l1-1.2z" fill="#3a5af0" stroke="#3a5af0" stroke-width="0.6"/><path d="M483.8 71.4h4.4" stroke="#aaa" stroke-width="0.5"/>
<!-- D15 zoom all -->
<circle cx="500" cy="71.4" r="3.8" fill="#fff" stroke="#333" stroke-width="0.9"/><path d="M502.8 74.4l2.8 2.8" stroke="#222" stroke-width="1.2"/><path d="M498 73.6l2-4.6l2.8 1l-1.8 3.6z" fill="#444"/><path d="M502 68.6q2 0.2 3.2 1.6" fill="none" stroke="#333" stroke-width="0.9"/>
<!-- D16 zoom blue -->
<circle cx="514.4" cy="71.4" r="3.8" fill="#fff" stroke="#333" stroke-width="0.9"/><path d="M517.2 74.4l2.8 2.8" stroke="#222" stroke-width="1.2"/><path d="M512.6 69h2.4l1.3 1.3v3.6h-3.7z" fill="#fafaff" stroke="#4a4af4" stroke-width="0.6"/>
</svg>

<!-- ===== ICON OVERLAY 3: bottom pane toolbar (y center 440.5) ===== -->
<svg class="a" style="left:274px;top:432px;" width="80" height="16" viewBox="274 432 80 16">
<path d="M306.3 434v12.6" stroke="#c9c9c9" stroke-width="0.9"/><path d="M307.1 434v12.6" stroke="#fbfbfb" stroke-width="0.7"/>
<path d="M280.6 437.4l1.6-1.4h6.4v7l-1.4 1.4" fill="#c8c8ff" stroke="#3a3af0" stroke-width="0.8"/><rect x="279.6" y="437.6" width="7.6" height="6.8" fill="#e8e8ff" stroke="#3a3af0" stroke-width="1"/><rect x="281.4" y="439.2" width="4" height="3.6" fill="#8a8af6"/><path d="M278 443.4h2" stroke="#3a3af0" stroke-width="1.2"/>
<path d="M293.4 440l2.6-3h5.4l-2.6 3z" fill="#8a8af6"/><path d="M293.4 440h5.4v4.8h-5.4z" fill="#7070f2"/><path d="M298.8 440l2.6-3v4.8l-2.6 3z" fill="#5858e0"/><path d="M302.4 437v3" stroke="#999" stroke-width="0.6"/><text x="301.2" y="445" font-family="Liberation Sans" font-size="4.6" fill="#e83030">3</text>
<rect x="311.4" y="437.2" width="6" height="6.6" fill="#7c7cf4"/><rect x="313" y="438.8" width="2.4" height="3.4" fill="#f0a0a0" stroke="#e8e8ff" stroke-width="0.4"/><path d="M319.4 438.4v5" stroke="#2a2ae0" stroke-width="0.9"/><circle cx="319.4" cy="437.6" r="0.6" fill="#2a2ae0"/>
<rect x="325.6" y="437.2" width="6" height="6.6" fill="#7c7cf4"/><rect x="327.2" y="438.8" width="2.4" height="3.4" fill="#f0a0a0" stroke="#e8e8ff" stroke-width="0.4"/><rect x="332.4" y="437.6" width="1.6" height="5" fill="#8a8a8a"/><path d="M333.2 442.6v2" stroke="#e04040" stroke-width="1"/>
<rect x="339.6" y="437.4" width="9" height="6.6" fill="#fafafa" stroke="#9a9a9a" stroke-width="0.7"/><path d="M341 439.4h5M341 441h3.6" stroke="#4a4ad8" stroke-width="0.7"/><rect x="345.4" y="441.4" width="2.4" height="2.4" fill="#e04040"/><rect x="346" y="442.8" width="1.6" height="1.4" fill="#3a3ad0"/>
</svg>


<!-- ===== DIALOG ===== -->
<div class="a" style="left:349.5px;top:127.4px;width:500.6px;height:394.4px;background:#f0f0f0;border:0.7px solid #b9b9b9;box-shadow:0 2px 9px 1px rgba(0,0,0,0.33);"></div>
<div class="a" style="left:350.2px;top:128px;width:499.6px;height:14.6px;background:#fff;"></div>
<svg class="a" style="left:353px;top:130px;" width="10" height="10" viewBox="0 0 10 10"><path d="M0.3 0.6h5.4v1.7H2.4v1.4h2.6v1.6H2.4v1.5h3.3v1.7H0.3z" fill="#1212c8"/><rect x="5.3" y="4.2" width="3.6" height="5" fill="#e87878" stroke="#2a2ab0" stroke-width="0.7"/></svg>
<div class="t seg" style="left:365.2px;top:131.4px;color:#9a9a9a;letter-spacing:-0.185px;">Overenie návrhu rozvádzača určeného na prevádzkovanie laikmi (DBO) podľa STN EN 61439-3</div>
<svg class="a" style="left:836.5px;top:131px;" width="8" height="8" viewBox="0 0 8 8"><path d="M0.6 0.6L7.2 7.2M7.2 0.6L0.6 7.2" stroke="#9a9a9a" stroke-width="0.8" fill="none"/></svg>

<!-- GB1 Rozvodnice Eaton -->
<div class="gb" style="left:355.2px;top:151.3px;width:240px;height:32.2px;"></div>
<div class="gl" style="left:360.8px;top:147.6px;">Rozvodnice Eaton (typové označenie prázdnej rozvodnice):</div>
<div class="ed" style="left:365px;top:163.4px;width:157.6px;height:11.4px;">BF-U-3/72-C</div>
<div class="bt" style="left:530.2px;top:162.2px;width:60px;height:15px;border:1.2px solid #2a2a2a;box-shadow:inset -1px -1px 0 #8a8a8a, inset 1px 1px 0 #fcfcfc;line-height:13.6px;">Detaily</div>

<!-- GB R1 Rozvádzač -->
<div class="gb" style="left:605.2px;top:151.3px;width:239.6px;height:32.2px;"></div>
<div class="gl" style="left:610.8px;top:147.6px;">Rozvádzač (typové označenie osadeného certifikovaného rozvádzača):</div>
<div class="ed" style="left:615px;top:163.4px;width:157.6px;height:11.4px;">DBM-B-F-372-340-27030002</div>
<div class="bt" style="left:780.2px;top:162.2px;width:60px;height:15px;line-height:13px;">Detaily</div>

<!-- GB2 Vstupný spínací -->
<div class="gb" style="left:355.2px;top:191.6px;width:240px;height:96.8px;"></div>
<div class="gl" style="left:360.8px;top:187.9px;">Vstupný spínací / istiaci prístroj:</div>
<div class="cb" style="left:365px;top:207px;width:7.4px;height:7.4px;"></div>
<div class="t" style="left:377.5px;top:203.2px;">Bez vstupného prístroja (napr. bytové</div>
<div class="t" style="left:377px;top:211.3px;">rozvodnice v panelových domoch)</div>
<div class="ed" style="left:365px;top:223.9px;width:74.4px;height:10.8px;">QM1</div>
<div class="ed" style="left:445px;top:223.9px;width:69px;height:10.8px;">ZP-A40/3</div>
<div class="bt" style="left:520px;top:223.2px;width:70.2px;height:15px;line-height:13px;">Vybrať</div>
<div class="t" style="left:367px;top:243.8px;">Počet fáz:</div>
<div class="t" style="left:447px;top:243.8px;">Menovitý prúd [A]:</div>
<div class="t" style="left:522px;top:243.8px;">Skrat. odolnosť [kA]:</div>
<div class="ed w" style="left:365px;top:254px;width:74.4px;height:11.5px;line-height:10px;">3</div>
<div class="bt" style="left:428.0px;top:254.8px;width:10.6px;height:10.1px;"></div><div class="arr" style="left:430.9px;top:258.7px;"></div>
<div class="ed w" style="left:445px;top:254px;width:69.6px;height:11.5px;line-height:10px;">40</div>
<div class="bt" style="left:503.2px;top:254.8px;width:10.6px;height:10.1px;"></div><div class="arr" style="left:506.1px;top:258.7px;"></div>
<div class="ed" style="left:520px;top:254px;width:69px;height:11.5px;line-height:10px;color:#8c8c8c;">6</div>
<div class="bt" style="left:577.6px;top:254.8px;width:10.6px;height:10.1px;"></div><div class="arr dis" style="left:580.5px;top:258.7px;"></div>

<!-- GB R2 Počet výstupných obvodov -->
<div class="gb" style="left:605.2px;top:191.6px;width:239.6px;height:96.8px;"></div>
<div class="gl" style="left:610.8px;top:187.9px;">Počet výstupných obvodov:</div>
<div class="ed w" style="left:615px;top:204px;width:74.4px;height:11.5px;line-height:10px;padding-left:1.8px;">10 a viac</div>
<div class="bt" style="left:678.0px;top:204.8px;width:10.6px;height:10.1px;"></div><div class="arr" style="left:680.9px;top:208.7px;"></div>
<div class="t" style="left:617px;top:227.2px;">Počet ističov:</div>
<div class="t" style="left:617px;top:242.4px;">Počet chráničov:</div>
<div class="t" style="left:617px;top:257.6px;">Počet chráničov s nadprúdovou ochranou:</div>
<div class="t" style="left:617px;top:272.6px;">Počet ostatných prístrojov:</div>
<div class="ed" style="left:770px;top:223.2px;width:34.6px;height:11.2px;">27</div>
<div class="ed" style="left:770px;top:238.4px;width:34.6px;height:11.2px;">3</div>
<div class="ed" style="left:770px;top:253.7px;width:34.6px;height:11.2px;">0</div>
<div class="ed" style="left:770px;top:268.8px;width:34.6px;height:11.2px;">2</div>

<!-- GB3 Organizácia -->
<div class="gb" style="left:355.2px;top:297.4px;width:489.6px;height:25.8px;"></div>
<div class="gl" style="left:360.8px;top:293.7px;">Organizácia, ktorá vykonala pôvodný návrh a pridružené overovanie (pôvodný výrobca):</div>
<div class="cb" style="left:365px;top:308.4px;width:7.4px;height:7.4px;"></div>
<svg class="a" style="left:366px;top:309.4px;" width="6" height="6" viewBox="0 0 6 6"><path d="M0.8 2.6L2.3 4.3L5.2 0.9" stroke="#000" stroke-width="1.2" fill="none"/></svg>
<div class="t" style="left:377.5px;top:308.2px;">Pôvodný výrobca je Eaton</div>

<!-- GB4 Overenie konfigurácie -->
<div class="gb" style="left:355.2px;top:331.3px;width:488.4px;height:156.5px;"></div>
<div class="gl" style="left:360.8px;top:327.6px;">Overenie konfigurácie:</div>
<!-- Veľkosť -->
<div class="gb" style="left:360.2px;top:341.8px;width:234.9px;height:141px;"></div>
<div class="gl" style="left:365.8px;top:338px;">Veľkosť:</div>
<div class="t" style="left:372px;top:354.7px;">Počet modulov na lištách rozvodnice:</div>
<div class="t" style="left:372px;top:374.8px;">Počet modulov, ktoré zaberajú vybrané prístroje:</div>
<div class="ed" style="left:524.6px;top:353.4px;width:35px;height:11.4px;">72,0</div>
<div class="ed" style="left:524.6px;top:373.7px;width:35px;height:11.4px;">53,0</div>
<div class="t" style="left:371.4px;top:465.3px;">Overenie veľkosti:</div>
<div class="a" style="left:495px;top:458.7px;width:95.2px;height:20.2px;border:1px solid;border-color:#8f8f8f #bdbdbd #bdbdbd #8f8f8f;"></div>
<div class="t" style="left:497.6px;top:462.7px;font-weight:bold;font-size:9.6px;line-height:11px;height:11px;color:#1f8a2a;letter-spacing:-0.28px;">VYHOVUJE</div>
<!-- Oteplenie -->
<div class="gb" style="left:605.2px;top:341.8px;width:234.6px;height:141px;"></div>
<div class="gl" style="left:610.8px;top:338px;">Oteplenie:</div>
<div class="t" style="left:617px;top:360.2px;">Maximálny stratový výkon pre rozvodnicu:</div>
<div class="t" style="left:617px;top:380.4px;">Stratový výkon osadených prístrojov:</div>
<div class="t" style="left:617px;top:400.4px;">Stratový výkon vodičov:</div>
<div class="t" style="left:617px;top:420.4px;">Súdobosť:</div>
<div class="t" style="left:617px;top:436.3px;">Stratový výkon osadených prístrojov a vodičov s</div>
<div class="t" style="left:616.6px;top:444.1px;">ohľadom na koeficient súdobosti:</div>
<div class="ed" style="left:770px;top:358.4px;width:34.6px;height:11.4px;">81,0</div>
<div class="ed" style="left:770px;top:378.5px;width:34.6px;height:11.4px;">119,56</div>
<div class="ed w" style="left:770px;top:398.8px;width:34.6px;height:11.4px;">14,7</div>
<div class="ed" style="left:770px;top:418.8px;width:34.6px;height:11.4px;">0,5</div>
<div class="ed" style="left:770px;top:438.8px;width:34.6px;height:11.4px;">33,6</div>
<div class="t" style="left:807.6px;top:360px;">W</div>
<div class="t" style="left:807.6px;top:380.2px;">W</div>
<div class="t" style="left:807.6px;top:400.2px;">W</div>
<div class="t" style="left:807.4px;top:419.6px;font-size:4.6px;">2</div>
<div class="t" style="left:807.6px;top:440.4px;">W</div>
<div class="bt" style="left:820px;top:397.4px;width:17.4px;height:17.4px;line-height:16.5px;color:#333;">&gt;&gt;</div>
<div class="t" style="left:616.8px;top:465.3px;">Overenie oteplenia:</div>
<div class="a" style="left:740px;top:458.7px;width:95.2px;height:20.2px;border:1px solid;border-color:#8f8f8f #bdbdbd #bdbdbd #8f8f8f;"></div>
<div class="t" style="left:742.6px;top:462.7px;font-weight:bold;font-size:9.6px;line-height:11px;height:11px;color:#1f8a2a;letter-spacing:-0.28px;">VYHOVUJE</div>

<!-- bottom row -->
<div class="bt" style="left:360px;top:493.7px;width:20.2px;height:20.2px;"></div>
<svg class="a" style="left:364.6px;top:498.2px;" width="11" height="11" viewBox="-1 -1 11 11"><circle cx="4.5" cy="4.5" r="4.3" fill="#fff" stroke="#6a6a6a" stroke-width="0.9"/><rect x="3.9" y="3.7" width="1.3" height="3" fill="#1414d8"/><rect x="3.9" y="1.9" width="1.3" height="1.2" fill="#1414d8"/></svg>
<div class="cb" style="left:390px;top:499.4px;width:7.4px;height:7.4px;"></div>
<div class="t" style="left:402.5px;top:496.5px;">Užívateľ je oboznámený s návodom na zostavenie</div>
<div class="t" style="left:402px;top:504.8px;">rozvádzača a na overenie návrhu</div>
<div class="bt" style="left:635px;top:493.7px;width:100.2px;height:20.6px;line-height:18.8px;">Generovať dokumenty</div>
<div class="bt" style="left:740px;top:493.7px;width:100.2px;height:20.6px;line-height:18.8px;">Uzavrieť</div>

</body></html>
